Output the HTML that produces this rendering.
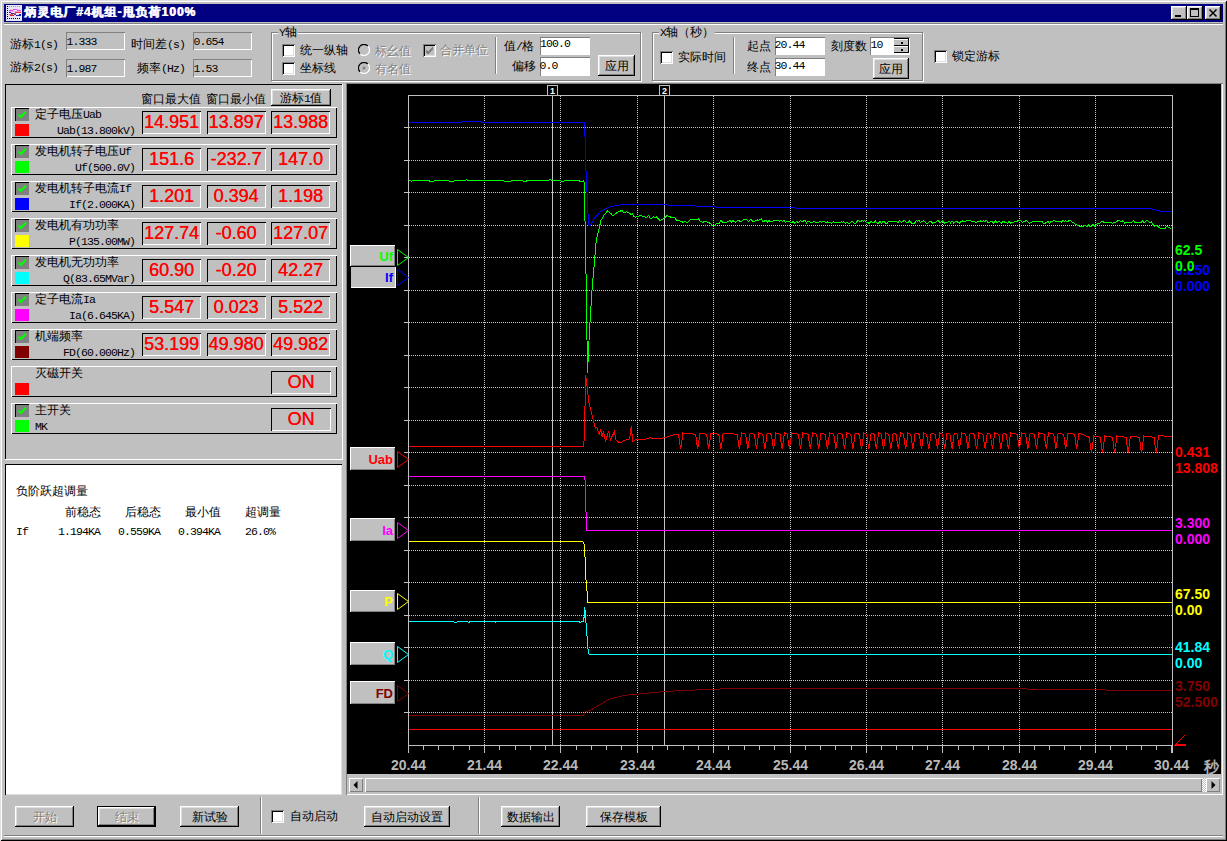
<!DOCTYPE html><html><head><meta charset="utf-8"><style>
html,body{margin:0;padding:0;width:1227px;height:841px;overflow:hidden;background:#c0c0c0;}
body{position:relative;font-family:"Liberation Sans",sans-serif;}
.t{position:absolute;font-size:12px;line-height:12px;white-space:nowrap;}
.m{font-family:"Liberation Mono",monospace;font-size:11.5px;letter-spacing:-0.9px;}
.big{position:absolute;font-family:"Liberation Sans",sans-serif;font-size:18px;line-height:18px;color:#f00;text-shadow:0.35px 0 #f00;text-align:center;white-space:nowrap;}
.cl{position:absolute;font-family:"Liberation Sans",sans-serif;font-weight:bold;font-size:14px;line-height:14px;white-space:nowrap;}
</style></head><body>
<div style="position:absolute;left:0px;top:0px;width:1227px;height:841px;box-shadow:inset 1px 1px #dfdfdf,inset -1px -1px #000,inset 2px 2px #fff,inset -2px -2px #808080;"></div>
<div style="position:absolute;left:4px;top:4px;width:1219px;height:18px;background:#000080;"></div>
<div style="position:absolute;left:4px;top:23px;width:1219px;height:2px;border-top:1px solid #808080;border-bottom:1px solid #fff;box-sizing:border-box;"></div>
<svg style="position:absolute;left:6px;top:5px" width="16" height="16" shape-rendering="crispEdges"><rect x="0" y="0" width="16" height="16" fill="#e4e4f4"/><rect x="1" y="1" width="1" height="1" fill="#000"/><rect x="1" y="3" width="1" height="1" fill="#000"/><rect x="1" y="5" width="1" height="1" fill="#000"/><rect x="1" y="7" width="1" height="1" fill="#000"/><rect x="1" y="9" width="1" height="1" fill="#000"/><rect x="1" y="11" width="1" height="1" fill="#000"/><rect x="1" y="13" width="1" height="1" fill="#000"/><rect x="3" y="13" width="1" height="1" fill="#000"/><rect x="5" y="13" width="1" height="1" fill="#000"/><rect x="7" y="13" width="1" height="1" fill="#000"/><rect x="9" y="13" width="1" height="1" fill="#000"/><rect x="11" y="13" width="1" height="1" fill="#000"/><rect x="13" y="13" width="1" height="1" fill="#000"/><rect x="3" y="1" width="1" height="1" fill="#98a898"/><rect x="5" y="1" width="1" height="1" fill="#98a898"/><rect x="7" y="1" width="1" height="1" fill="#98a898"/><rect x="9" y="1" width="1" height="1" fill="#98a898"/><rect x="11" y="1" width="1" height="1" fill="#98a898"/><rect x="13" y="1" width="1" height="1" fill="#98a898"/><rect x="7" y="4" width="4" height="1" fill="#e050e0"/><rect x="3" y="5" width="4" height="1" fill="#e050e0"/><rect x="11" y="5" width="4" height="1" fill="#e050e0"/><rect x="3" y="6" width="12" height="1" fill="#ff98d0"/><rect x="4" y="4" width="3" height="1" fill="#f0c0f0"/><rect x="11" y="4" width="3" height="1" fill="#f0c0f0"/><rect x="3" y="7" width="2" height="1" fill="#2020c0"/><rect x="5" y="8" width="3" height="1" fill="#2020c0"/><rect x="8" y="9" width="2" height="1" fill="#802080"/><rect x="10" y="10" width="2" height="1" fill="#2020c0"/><rect x="12" y="10" width="3" height="1" fill="#2020c0"/><rect x="13" y="9" width="2" height="1" fill="#2020c0"/><rect x="9" y="7" width="6" height="1" fill="#e04040"/><rect x="8" y="8" width="2" height="1" fill="#e06060"/><rect x="3" y="9" width="4" height="1" fill="#e06060"/><rect x="4" y="10" width="4" height="1" fill="#d02020"/></svg>
<div class="t" style="left:24px;top:6px;color:#fff;font-weight:bold;letter-spacing:1px;font-size:12px;text-shadow:0.7px 0 #fff">炳灵电厂#4机组-甩负荷100%</div>
<div style="position:absolute;left:1171px;top:6px;width:16px;height:14px;background:#c0c0c0;box-shadow:inset -1px -1px #000,inset 1px 1px #fff,inset -2px -2px #808080,inset 2px 2px #dfdfdf;"></div>
<div style="position:absolute;left:1187px;top:6px;width:16px;height:14px;background:#c0c0c0;box-shadow:inset -1px -1px #000,inset 1px 1px #fff,inset -2px -2px #808080,inset 2px 2px #dfdfdf;"></div>
<div style="position:absolute;left:1205px;top:6px;width:16px;height:14px;background:#c0c0c0;box-shadow:inset -1px -1px #000,inset 1px 1px #fff,inset -2px -2px #808080,inset 2px 2px #dfdfdf;"></div>
<div style="position:absolute;left:1175px;top:15px;width:6px;height:2px;background:#000"></div>
<div style="position:absolute;left:1190px;top:8px;width:9px;height:9px;box-sizing:border-box;border:1px solid #000;border-top-width:2px"></div>
<svg style="position:absolute;left:1205px;top:6px" width="16" height="14"><path d="M4.5 3.5 L11.5 10.5 M11.5 3.5 L4.5 10.5" stroke="#000" stroke-width="1.5"/></svg>
<div class="t" style="left:10px;top:38px;color:#000;">游标<span class="m">1(s)</span></div>
<div style="position:absolute;left:66px;top:32px;width:59px;height:18px;box-shadow:inset 1px 1px #808080,inset -1px -1px #fff;"></div>
<div class="t" style="left:66.5px;top:35px;color:#000;"><span class="m">1.333</span></div>
<div class="t" style="left:131px;top:38px;color:#000;">时间差<span class="m">(s)</span></div>
<div style="position:absolute;left:193px;top:32px;width:59px;height:18px;box-shadow:inset 1px 1px #808080,inset -1px -1px #fff;"></div>
<div class="t" style="left:193.5px;top:35px;color:#000;"><span class="m">0.654</span></div>
<div class="t" style="left:10px;top:61px;color:#000;">游标<span class="m">2(s)</span></div>
<div style="position:absolute;left:66px;top:59px;width:59px;height:18px;box-shadow:inset 1px 1px #808080,inset -1px -1px #fff;"></div>
<div class="t" style="left:66.5px;top:62px;color:#000;"><span class="m">1.987</span></div>
<div class="t" style="left:137px;top:62px;color:#000;">频率<span class="m">(Hz)</span></div>
<div style="position:absolute;left:193px;top:59px;width:59px;height:18px;box-shadow:inset 1px 1px #808080,inset -1px -1px #fff;"></div>
<div class="t" style="left:193.5px;top:62px;color:#000;"><span class="m">1.53</span></div>
<div style="position:absolute;left:271px;top:32px;width:370px;height:49px;border:1px solid #808080;box-shadow:1px 1px #fff, inset 1px 1px #fff;box-sizing:border-box;"></div>
<div class="t" style="left:278px;top:26px;background:#c0c0c0;padding:0 1px"><span class="m">Y</span>轴</div>
<div style="position:absolute;left:282px;top:44px;width:13px;height:13px;background:#fff;box-shadow:inset 1px 1px #808080,inset -1px -1px #fff,inset 2px 2px #000,inset -2px -2px #dfdfdf;"></div>
<div class="t" style="left:300px;top:44px;color:#000;">统一纵轴</div>
<div style="position:absolute;left:282px;top:62px;width:13px;height:13px;background:#fff;box-shadow:inset 1px 1px #808080,inset -1px -1px #fff,inset 2px 2px #000,inset -2px -2px #dfdfdf;"></div>
<div class="t" style="left:300px;top:62px;color:#000;">坐标线</div>
<svg style="position:absolute;left:358px;top:44px" width="12" height="12"><path d="M2.1 9.9 A5.5 5.5 0 0 1 9.9 2.1" stroke="#000" stroke-width="1.3" fill="none"/><path d="M9.9 2.1 A5.5 5.5 0 0 1 2.1 9.9" stroke="#fff" stroke-width="1.3" fill="none"/><circle cx="6" cy="6" r="4.6" fill="#c0c0c0"/>
</svg>
<div class="t" style="left:375px;top:45px;color:#808080;text-shadow:1px 1px #fff;">标幺值</div>
<svg style="position:absolute;left:358px;top:62px" width="12" height="12"><path d="M2.1 9.9 A5.5 5.5 0 0 1 9.9 2.1" stroke="#000" stroke-width="1.3" fill="none"/><path d="M9.9 2.1 A5.5 5.5 0 0 1 2.1 9.9" stroke="#fff" stroke-width="1.3" fill="none"/><circle cx="6" cy="6" r="4.6" fill="#c0c0c0"/>
<circle cx="6" cy="6" r="1.5" fill="#808080"/>
</svg>
<div class="t" style="left:375px;top:62.5px;color:#808080;text-shadow:1px 1px #fff;">有名值</div>
<div style="position:absolute;left:423px;top:44px;width:13px;height:13px;background:#c0c0c0;box-shadow:inset 1px 1px #808080,inset -1px -1px #fff,inset 2px 2px #000,inset -2px -2px #dfdfdf;"></div>
<svg style="position:absolute;left:423px;top:44px" width="13" height="13"><path d="M3 6 L5 8 L10 3 M3 7 L5 9 L10 4 M3 8 L5 10 L10 5" stroke="#808080" stroke-width="1" fill="none"/></svg>
<div class="t" style="left:440px;top:44px;color:#808080;text-shadow:1px 1px #fff;">合并单位</div>
<div style="position:absolute;left:495px;top:37px;width:1px;height:37px;background:#808080;box-shadow:1px 0 #fff;"></div>
<div class="t" style="left:504px;top:40px;color:#000;">值<span class="m">/</span>格</div>
<div style="position:absolute;left:540px;top:37px;width:50px;height:18px;background:#fff;box-shadow:inset 1px 1px #808080,inset -1px -1px #fff;"></div>
<div class="t" style="left:540px;top:37px;color:#000;"><span class="m">100.0</span></div>
<div class="t" style="left:512px;top:60px;color:#000;">偏移</div>
<div style="position:absolute;left:540px;top:57px;width:50px;height:19px;background:#fff;box-shadow:inset 1px 1px #808080,inset -1px -1px #fff;"></div>
<div class="t" style="left:539.5px;top:58.5px;color:#000;"><span class="m">0.0</span></div>
<div style="position:absolute;left:598px;top:55px;width:37px;height:21px;background:#c0c0c0;box-shadow:inset -1px -1px #000,inset 1px 1px #fff,inset -2px -2px #808080,inset 2px 2px #dfdfdf;"></div>
<div class="t" style="left:598px;top:59.5px;width:37px;text-align:center;color:#000;">应用</div>
<div style="position:absolute;left:652px;top:32px;width:271px;height:49px;border:1px solid #808080;box-shadow:1px 1px #fff, inset 1px 1px #fff;box-sizing:border-box;"></div>
<div class="t" style="left:659px;top:26px;background:#c0c0c0;padding:0 1px"><span class="m">X</span>轴（秒）</div>
<div style="position:absolute;left:660px;top:51px;width:13px;height:13px;background:#fff;box-shadow:inset 1px 1px #808080,inset -1px -1px #fff,inset 2px 2px #000,inset -2px -2px #dfdfdf;"></div>
<div class="t" style="left:678px;top:51px;color:#000;">实际时间</div>
<div style="position:absolute;left:733px;top:37px;width:1px;height:37px;background:#808080;box-shadow:1px 0 #fff;"></div>
<div class="t" style="left:747px;top:40px;color:#000;">起点</div>
<div style="position:absolute;left:775px;top:37px;width:50px;height:18px;background:#fff;box-shadow:inset 1px 1px #808080,inset -1px -1px #fff;"></div>
<div class="t" style="left:774.5px;top:38px;color:#000;"><span class="m">20.44</span></div>
<div class="t" style="left:747px;top:61px;color:#000;">终点</div>
<div style="position:absolute;left:775px;top:58px;width:50px;height:18px;background:#fff;box-shadow:inset 1px 1px #808080,inset -1px -1px #fff;"></div>
<div class="t" style="left:774.5px;top:59px;color:#000;"><span class="m">30.44</span></div>
<div class="t" style="left:831px;top:40px;color:#000;">刻度数</div>
<div style="position:absolute;left:870px;top:37px;width:40px;height:18px;background:#fff;box-shadow:inset 1px 1px #808080,inset -1px -1px #fff;"></div>
<div class="t" style="left:870.5px;top:38px;color:#000;"><span class="m">10</span></div>
<div style="position:absolute;left:894px;top:38px;width:15px;height:15px;background:#c0c0c0;border-top:1px solid #000;border-right:1px solid #000;box-sizing:border-box;"></div>
<div style="position:absolute;left:894px;top:39px;width:14px;height:7px;background:#c0c0c0;box-shadow:inset 0 1px #fff,inset 0 -1px #000;"></div>
<div style="position:absolute;left:894px;top:46px;width:14px;height:7px;background:#c0c0c0;box-shadow:inset 0 1px #fff,inset 0 -1px #000;"></div>
<div style="position:absolute;left:901px;top:42px;width:1.5px;height:1.5px;background:#000;"></div>
<div style="position:absolute;left:901px;top:49px;width:1.5px;height:1.5px;background:#000;"></div>
<div style="position:absolute;left:873px;top:58px;width:36px;height:21px;background:#c0c0c0;box-shadow:inset -1px -1px #000,inset 1px 1px #fff,inset -2px -2px #808080,inset 2px 2px #dfdfdf;"></div>
<div class="t" style="left:873px;top:62.5px;width:36px;text-align:center;color:#000;">应用</div>
<div style="position:absolute;left:934px;top:50px;width:13px;height:13px;background:#fff;box-shadow:inset 1px 1px #808080,inset -1px -1px #fff,inset 2px 2px #000,inset -2px -2px #dfdfdf;"></div>
<div class="t" style="left:952px;top:50px;color:#000;">锁定游标</div>
<div style="position:absolute;left:5px;top:84px;width:338px;height:376px;box-shadow:inset -1px -1px #fff,inset 1px 1px #000;"></div>
<div class="t" style="left:141px;top:92.5px;color:#000;">窗口最大值</div>
<div class="t" style="left:206px;top:92.5px;color:#000;">窗口最小值</div>
<div style="position:absolute;left:271px;top:89px;width:60px;height:17px;background:#c0c0c0;box-shadow:inset -1px -1px #000,inset 1px 1px #fff,inset -2px -2px #808080,inset 2px 2px #dfdfdf;"></div>
<div class="t" style="left:271px;top:91.5px;width:60px;text-align:center;color:#000;">游标<span class="m">1</span>值</div>
<div style="position:absolute;left:11px;top:107px;width:326px;height:31px;background:#c0c0c0;box-shadow:inset 1px 1px #fff,inset -1px -1px #000;"></div>
<div style="position:absolute;left:15px;top:108px;width:14px;height:13px;background:#808080;box-shadow:inset 1px 1px #000;"></div>
<svg style="position:absolute;left:15px;top:108px" width="14" height="13"><path d="M3.5 6.5 L6 9 L11 3.5" stroke="#00ff00" stroke-width="2" fill="none"/></svg>
<div style="position:absolute;left:15px;top:124px;width:14px;height:12px;background:#ff0000;"></div>
<div class="t" style="left:35px;top:108px;color:#000;">定子电压<span class="m">Uab</span></div>
<div class="t" style="right:1092px;top:124px;color:#000;"><span class="m">Uab(13.800kV)</span></div>
<div style="position:absolute;left:142.0px;top:111px;width:59px;height:23px;background:#c0c0c0;box-shadow:inset 1px 1px #000,inset -1px -1px #fff;"></div>
<div class="big" style="left:142.0px;top:112.5px;width:59px">14.951</div>
<div style="position:absolute;left:206.5px;top:111px;width:59px;height:23px;background:#c0c0c0;box-shadow:inset 1px 1px #000,inset -1px -1px #fff;"></div>
<div class="big" style="left:206.5px;top:112.5px;width:59px">13.897</div>
<div style="position:absolute;left:271.0px;top:111px;width:59px;height:23px;background:#c0c0c0;box-shadow:inset 1px 1px #000,inset -1px -1px #fff;"></div>
<div class="big" style="left:271.0px;top:112.5px;width:59px">13.988</div>
<div style="position:absolute;left:11px;top:144px;width:326px;height:31px;background:#c0c0c0;box-shadow:inset 1px 1px #fff,inset -1px -1px #000;"></div>
<div style="position:absolute;left:15px;top:145px;width:14px;height:13px;background:#808080;box-shadow:inset 1px 1px #000;"></div>
<svg style="position:absolute;left:15px;top:145px" width="14" height="13"><path d="M3.5 6.5 L6 9 L11 3.5" stroke="#00ff00" stroke-width="2" fill="none"/></svg>
<div style="position:absolute;left:15px;top:161px;width:14px;height:12px;background:#00ff00;"></div>
<div class="t" style="left:35px;top:145px;color:#000;">发电机转子电压<span class="m">Uf</span></div>
<div class="t" style="right:1092px;top:161px;color:#000;"><span class="m">Uf(500.0V)</span></div>
<div style="position:absolute;left:142.0px;top:148px;width:59px;height:23px;background:#c0c0c0;box-shadow:inset 1px 1px #000,inset -1px -1px #fff;"></div>
<div class="big" style="left:142.0px;top:149.5px;width:59px">151.6</div>
<div style="position:absolute;left:206.5px;top:148px;width:59px;height:23px;background:#c0c0c0;box-shadow:inset 1px 1px #000,inset -1px -1px #fff;"></div>
<div class="big" style="left:206.5px;top:149.5px;width:59px">-232.7</div>
<div style="position:absolute;left:271.0px;top:148px;width:59px;height:23px;background:#c0c0c0;box-shadow:inset 1px 1px #000,inset -1px -1px #fff;"></div>
<div class="big" style="left:271.0px;top:149.5px;width:59px">147.0</div>
<div style="position:absolute;left:11px;top:181px;width:326px;height:31px;background:#c0c0c0;box-shadow:inset 1px 1px #fff,inset -1px -1px #000;"></div>
<div style="position:absolute;left:15px;top:182px;width:14px;height:13px;background:#808080;box-shadow:inset 1px 1px #000;"></div>
<svg style="position:absolute;left:15px;top:182px" width="14" height="13"><path d="M3.5 6.5 L6 9 L11 3.5" stroke="#00ff00" stroke-width="2" fill="none"/></svg>
<div style="position:absolute;left:15px;top:198px;width:14px;height:12px;background:#0000ff;"></div>
<div class="t" style="left:35px;top:182px;color:#000;">发电机转子电流<span class="m">If</span></div>
<div class="t" style="right:1092px;top:198px;color:#000;"><span class="m">If(2.000KA)</span></div>
<div style="position:absolute;left:142.0px;top:185px;width:59px;height:23px;background:#c0c0c0;box-shadow:inset 1px 1px #000,inset -1px -1px #fff;"></div>
<div class="big" style="left:142.0px;top:186.5px;width:59px">1.201</div>
<div style="position:absolute;left:206.5px;top:185px;width:59px;height:23px;background:#c0c0c0;box-shadow:inset 1px 1px #000,inset -1px -1px #fff;"></div>
<div class="big" style="left:206.5px;top:186.5px;width:59px">0.394</div>
<div style="position:absolute;left:271.0px;top:185px;width:59px;height:23px;background:#c0c0c0;box-shadow:inset 1px 1px #000,inset -1px -1px #fff;"></div>
<div class="big" style="left:271.0px;top:186.5px;width:59px">1.198</div>
<div style="position:absolute;left:11px;top:218px;width:326px;height:31px;background:#c0c0c0;box-shadow:inset 1px 1px #fff,inset -1px -1px #000;"></div>
<div style="position:absolute;left:15px;top:219px;width:14px;height:13px;background:#808080;box-shadow:inset 1px 1px #000;"></div>
<svg style="position:absolute;left:15px;top:219px" width="14" height="13"><path d="M3.5 6.5 L6 9 L11 3.5" stroke="#00ff00" stroke-width="2" fill="none"/></svg>
<div style="position:absolute;left:15px;top:235px;width:14px;height:12px;background:#ffff00;"></div>
<div class="t" style="left:35px;top:219px;color:#000;">发电机有功功率</div>
<div class="t" style="right:1092px;top:235px;color:#000;"><span class="m">P(135.00MW)</span></div>
<div style="position:absolute;left:142.0px;top:222px;width:59px;height:23px;background:#c0c0c0;box-shadow:inset 1px 1px #000,inset -1px -1px #fff;"></div>
<div class="big" style="left:142.0px;top:223.5px;width:59px">127.74</div>
<div style="position:absolute;left:206.5px;top:222px;width:59px;height:23px;background:#c0c0c0;box-shadow:inset 1px 1px #000,inset -1px -1px #fff;"></div>
<div class="big" style="left:206.5px;top:223.5px;width:59px">-0.60</div>
<div style="position:absolute;left:271.0px;top:222px;width:59px;height:23px;background:#c0c0c0;box-shadow:inset 1px 1px #000,inset -1px -1px #fff;"></div>
<div class="big" style="left:271.0px;top:223.5px;width:59px">127.07</div>
<div style="position:absolute;left:11px;top:255px;width:326px;height:31px;background:#c0c0c0;box-shadow:inset 1px 1px #fff,inset -1px -1px #000;"></div>
<div style="position:absolute;left:15px;top:256px;width:14px;height:13px;background:#808080;box-shadow:inset 1px 1px #000;"></div>
<svg style="position:absolute;left:15px;top:256px" width="14" height="13"><path d="M3.5 6.5 L6 9 L11 3.5" stroke="#00ff00" stroke-width="2" fill="none"/></svg>
<div style="position:absolute;left:15px;top:272px;width:14px;height:12px;background:#00ffff;"></div>
<div class="t" style="left:35px;top:256px;color:#000;">发电机无功功率</div>
<div class="t" style="right:1092px;top:272px;color:#000;"><span class="m">Q(83.65MVar)</span></div>
<div style="position:absolute;left:142.0px;top:259px;width:59px;height:23px;background:#c0c0c0;box-shadow:inset 1px 1px #000,inset -1px -1px #fff;"></div>
<div class="big" style="left:142.0px;top:260.5px;width:59px">60.90</div>
<div style="position:absolute;left:206.5px;top:259px;width:59px;height:23px;background:#c0c0c0;box-shadow:inset 1px 1px #000,inset -1px -1px #fff;"></div>
<div class="big" style="left:206.5px;top:260.5px;width:59px">-0.20</div>
<div style="position:absolute;left:271.0px;top:259px;width:59px;height:23px;background:#c0c0c0;box-shadow:inset 1px 1px #000,inset -1px -1px #fff;"></div>
<div class="big" style="left:271.0px;top:260.5px;width:59px">42.27</div>
<div style="position:absolute;left:11px;top:292px;width:326px;height:31px;background:#c0c0c0;box-shadow:inset 1px 1px #fff,inset -1px -1px #000;"></div>
<div style="position:absolute;left:15px;top:293px;width:14px;height:13px;background:#808080;box-shadow:inset 1px 1px #000;"></div>
<svg style="position:absolute;left:15px;top:293px" width="14" height="13"><path d="M3.5 6.5 L6 9 L11 3.5" stroke="#00ff00" stroke-width="2" fill="none"/></svg>
<div style="position:absolute;left:15px;top:309px;width:14px;height:12px;background:#ff00ff;"></div>
<div class="t" style="left:35px;top:293px;color:#000;">定子电流<span class="m">Ia</span></div>
<div class="t" style="right:1092px;top:309px;color:#000;"><span class="m">Ia(6.645KA)</span></div>
<div style="position:absolute;left:142.0px;top:296px;width:59px;height:23px;background:#c0c0c0;box-shadow:inset 1px 1px #000,inset -1px -1px #fff;"></div>
<div class="big" style="left:142.0px;top:297.5px;width:59px">5.547</div>
<div style="position:absolute;left:206.5px;top:296px;width:59px;height:23px;background:#c0c0c0;box-shadow:inset 1px 1px #000,inset -1px -1px #fff;"></div>
<div class="big" style="left:206.5px;top:297.5px;width:59px">0.023</div>
<div style="position:absolute;left:271.0px;top:296px;width:59px;height:23px;background:#c0c0c0;box-shadow:inset 1px 1px #000,inset -1px -1px #fff;"></div>
<div class="big" style="left:271.0px;top:297.5px;width:59px">5.522</div>
<div style="position:absolute;left:11px;top:329px;width:326px;height:31px;background:#c0c0c0;box-shadow:inset 1px 1px #fff,inset -1px -1px #000;"></div>
<div style="position:absolute;left:15px;top:330px;width:14px;height:13px;background:#808080;box-shadow:inset 1px 1px #000;"></div>
<svg style="position:absolute;left:15px;top:330px" width="14" height="13"><path d="M3.5 6.5 L6 9 L11 3.5" stroke="#00ff00" stroke-width="2" fill="none"/></svg>
<div style="position:absolute;left:15px;top:346px;width:14px;height:12px;background:#800000;"></div>
<div class="t" style="left:35px;top:330px;color:#000;">机端频率</div>
<div class="t" style="right:1092px;top:346px;color:#000;"><span class="m">FD(60.000Hz)</span></div>
<div style="position:absolute;left:142.0px;top:333px;width:59px;height:23px;background:#c0c0c0;box-shadow:inset 1px 1px #000,inset -1px -1px #fff;"></div>
<div class="big" style="left:142.0px;top:334.5px;width:59px">53.199</div>
<div style="position:absolute;left:206.5px;top:333px;width:59px;height:23px;background:#c0c0c0;box-shadow:inset 1px 1px #000,inset -1px -1px #fff;"></div>
<div class="big" style="left:206.5px;top:334.5px;width:59px">49.980</div>
<div style="position:absolute;left:271.0px;top:333px;width:59px;height:23px;background:#c0c0c0;box-shadow:inset 1px 1px #000,inset -1px -1px #fff;"></div>
<div class="big" style="left:271.0px;top:334.5px;width:59px">49.982</div>
<div style="position:absolute;left:11px;top:366px;width:326px;height:31px;background:#c0c0c0;box-shadow:inset 1px 1px #fff,inset -1px -1px #000;"></div>
<div style="position:absolute;left:15px;top:383px;width:14px;height:12px;background:#ff0000;"></div>
<div class="t" style="left:35px;top:367px;color:#000;">灭磁开关</div>
<div style="position:absolute;left:271px;top:371px;width:60px;height:23px;background:#c0c0c0;box-shadow:inset 1px 1px #000,inset -1px -1px #fff;"></div>
<div class="big" style="left:271px;top:373px;width:60px">ON</div>
<div style="position:absolute;left:11px;top:403px;width:326px;height:31px;background:#c0c0c0;box-shadow:inset 1px 1px #fff,inset -1px -1px #000;"></div>
<div style="position:absolute;left:15px;top:404px;width:14px;height:13px;background:#808080;box-shadow:inset 1px 1px #000;"></div>
<svg style="position:absolute;left:15px;top:404px" width="14" height="13"><path d="M3.5 6.5 L6 9 L11 3.5" stroke="#00ff00" stroke-width="2" fill="none"/></svg>
<div style="position:absolute;left:15px;top:420px;width:14px;height:12px;background:#00ff00;"></div>
<div class="t" style="left:35px;top:404px;color:#000;">主开关</div>
<div class="t" style="left:35px;top:420px;color:#000;"><span class="m">MK</span></div>
<div style="position:absolute;left:271px;top:408px;width:60px;height:23px;background:#c0c0c0;box-shadow:inset 1px 1px #000,inset -1px -1px #fff;"></div>
<div class="big" style="left:271px;top:410px;width:60px">ON</div>
<div style="position:absolute;left:5px;top:464px;width:337px;height:331px;background:#fff;box-shadow:inset 1px 1px #000,inset -1px -1px #dfdfdf;"></div>
<div class="t" style="left:16px;top:485px;color:#000;">负阶跃超调量</div>
<div class="t" style="left:65px;top:505.5px;color:#000;">前稳态</div>
<div class="t" style="left:125px;top:505.5px;color:#000;">后稳态</div>
<div class="t" style="left:185px;top:505.5px;color:#000;">最小值</div>
<div class="t" style="left:245px;top:505.5px;color:#000;">超调量</div>
<div class="t" style="left:16px;top:525px;color:#000;"><span class="m">If</span></div>
<div class="t" style="left:58px;top:525px;color:#000;"><span class="m">1.194KA</span></div>
<div class="t" style="left:118px;top:525px;color:#000;"><span class="m">0.559KA</span></div>
<div class="t" style="left:178px;top:525px;color:#000;"><span class="m">0.394KA</span></div>
<div class="t" style="left:245px;top:525px;color:#000;"><span class="m">26.0%</span></div>
<div style="position:absolute;left:346px;top:83px;width:877px;height:712px;box-shadow:inset 1px 1px #808080,inset -1px -1px #fff;"></div>
<div style="position:absolute;left:347px;top:84px;width:874px;height:690px;background:#000;"></div>
<div style="position:absolute;left:349px;top:778px;width:14px;height:14px;background:#c0c0c0;box-shadow:inset 1px 1px #fff,inset -1px -1px #808080;"></div>
<svg style="position:absolute;left:349px;top:778px" width="14" height="14"><path d="M4.5 7 L8.5 3 L8.5 11 Z" fill="#000"/></svg>
<div style="position:absolute;left:365px;top:778px;width:841px;height:14px;background:conic-gradient(#fff 25%,#c0c0c0 0 50%,#fff 0 75%,#c0c0c0 0) 0 0/2px 2px;"></div>
<div style="position:absolute;left:365px;top:778px;width:837px;height:14px;background:#c0c0c0;box-shadow:inset 1px 1px #fff,inset -1px -1px #808080;"></div>
<div style="position:absolute;left:1206px;top:778px;width:14px;height:14px;background:#c0c0c0;box-shadow:inset 1px 1px #fff,inset -1px -1px #808080;"></div>
<svg style="position:absolute;left:1206px;top:778px" width="14" height="14"><path d="M9.5 7 L5.5 3 L5.5 11 Z" fill="#000"/></svg>
<div style="position:absolute;left:15px;top:806px;width:59px;height:21px;background:#c0c0c0;box-shadow:inset -1px -1px #000,inset 1px 1px #fff,inset -2px -2px #808080,inset 2px 2px #dfdfdf;"></div>
<div class="t" style="left:15px;top:810.5px;width:59px;text-align:center;color:#808080;text-shadow:1px 1px #fff;">开始</div>
<div style="position:absolute;left:97px;top:806px;width:59px;height:21px;background:#c0c0c0;border:1px solid #000;box-sizing:border-box;box-shadow:inset -1px -1px #000,inset 1px 1px #fff,inset -2px -2px #808080,inset 2px 2px #dfdfdf;"></div>
<div class="t" style="left:97px;top:810.5px;width:59px;text-align:center;color:#808080;text-shadow:1px 1px #fff;">结束</div>
<div style="position:absolute;left:180px;top:806px;width:59px;height:21px;background:#c0c0c0;box-shadow:inset -1px -1px #000,inset 1px 1px #fff,inset -2px -2px #808080,inset 2px 2px #dfdfdf;"></div>
<div class="t" style="left:180px;top:810.5px;width:59px;text-align:center;color:#000;">新试验</div>
<div style="position:absolute;left:260px;top:797px;width:1px;height:37px;background:#808080;box-shadow:1px 0 #fff;"></div>
<div style="position:absolute;left:271px;top:810px;width:13px;height:13px;background:#fff;box-shadow:inset 1px 1px #808080,inset -1px -1px #fff,inset 2px 2px #000,inset -2px -2px #dfdfdf;"></div>
<div class="t" style="left:290px;top:810px;color:#000;">自动启动</div>
<div style="position:absolute;left:364px;top:806px;width:86px;height:21px;background:#c0c0c0;box-shadow:inset -1px -1px #000,inset 1px 1px #fff,inset -2px -2px #808080,inset 2px 2px #dfdfdf;"></div>
<div class="t" style="left:364px;top:810.5px;width:86px;text-align:center;color:#000;">自动启动设置</div>
<div style="position:absolute;left:478px;top:797px;width:1px;height:37px;background:#808080;box-shadow:1px 0 #fff;"></div>
<div style="position:absolute;left:501px;top:806px;width:59px;height:21px;background:#c0c0c0;box-shadow:inset -1px -1px #000,inset 1px 1px #fff,inset -2px -2px #808080,inset 2px 2px #dfdfdf;"></div>
<div class="t" style="left:501px;top:810.5px;width:59px;text-align:center;color:#000;">数据输出</div>
<div style="position:absolute;left:586px;top:806px;width:75px;height:21px;background:#c0c0c0;box-shadow:inset -1px -1px #000,inset 1px 1px #fff,inset -2px -2px #808080,inset 2px 2px #dfdfdf;"></div>
<div class="t" style="left:586px;top:810.5px;width:75px;text-align:center;color:#000;">保存模板</div>
<div style="position:absolute;left:4px;top:835px;width:1219px;height:2px;border-top:1px solid #808080;border-bottom:1px solid #fff;box-sizing:border-box;"></div>
<svg style="position:absolute;left:0;top:0" width="1227" height="841" shape-rendering="crispEdges">
<path d="M484.5 96 V745 M560.5 96 V745 M637.5 96 V745 M713.5 96 V745 M790.5 96 V745 M866.5 96 V745 M942.5 96 V745 M1019.5 96 V745 M1095.5 96 V745 M409 127.5 H1172 M409 160.5 H1172 M409 192.5 H1172 M409 225.5 H1172 M409 257.5 H1172 M409 290.5 H1172 M409 322.5 H1172 M409 355.5 H1172 M409 387.5 H1172 M409 420.5 H1172 M409 452.5 H1172 M409 485.5 H1172 M409 517.5 H1172 M409 550.5 H1172 M409 582.5 H1172 M409 615.5 H1172 M409 647.5 H1172 M409 680.5 H1172 M409 712.5 H1172" stroke="#c8c8c8" stroke-dasharray="1 1" fill="none"/>
<path d="M404 127.5 H408 M404 160.5 H408 M404 192.5 H408 M404 225.5 H408 M404 257.5 H408 M404 290.5 H408 M404 322.5 H408 M404 355.5 H408 M404 387.5 H408 M404 420.5 H408 M404 452.5 H408 M404 485.5 H408 M404 517.5 H408 M404 550.5 H408 M404 582.5 H408 M404 615.5 H408 M404 647.5 H408 M404 680.5 H408 M404 712.5 H408 M408.5 746 V753 M423.5 746 V750 M438.5 746 V750 M453.5 746 V750 M469.5 746 V750 M484.5 746 V753 M499.5 746 V750 M515.5 746 V750 M530.5 746 V750 M545.5 746 V750 M560.5 746 V753 M576.5 746 V750 M591.5 746 V750 M606.5 746 V750 M621.5 746 V750 M637.5 746 V753 M652.5 746 V750 M667.5 746 V750 M683.5 746 V750 M698.5 746 V750 M713.5 746 V753 M728.5 746 V750 M744.5 746 V750 M759.5 746 V750 M774.5 746 V750 M790.5 746 V753 M805.5 746 V750 M820.5 746 V750 M835.5 746 V750 M851.5 746 V750 M866.5 746 V753 M881.5 746 V750 M896.5 746 V750 M912.5 746 V750 M927.5 746 V750 M942.5 746 V753 M958.5 746 V750 M973.5 746 V750 M988.5 746 V750 M1003.5 746 V750 M1019.5 746 V753 M1034.5 746 V750 M1049.5 746 V750 M1064.5 746 V750 M1080.5 746 V750 M1095.5 746 V753 M1110.5 746 V750 M1126.5 746 V750 M1141.5 746 V750 M1156.5 746 V750 M1171.5 746 V753" stroke="#c0c0c0" fill="none"/>
<path d="M408 95.5 H1173 M408.5 95 V753 M1172.5 95 V753 M408 745.5 H1173" stroke="#c0c0c0" fill="none"/>
<path d="M552.5 96 V745 M664.5 96 V745" stroke="#c0c0c0" fill="none"/>
<rect x="547.5" y="85.5" width="10" height="10" stroke="#c0c0c0" fill="#000"/>
<rect x="659.5" y="85.5" width="10" height="10" stroke="#c0c0c0" fill="#000"/>
</svg>
<div class="cl" style="left:550px;top:87px;color:#fff;font-size:9px;transform:none;line-height:9px">1</div>
<div class="cl" style="left:662px;top:87px;color:#fff;font-size:9px;transform:none;line-height:9px">2</div>
<svg style="position:absolute;left:0;top:0" width="1227" height="841" shape-rendering="crispEdges">
<g shape-rendering="crispEdges">
<path d="M409 476.5 H584" stroke="#ff00ff"/><path d="M586 530.5 H1172" stroke="#ff00ff"/>
<path d="M409 541.5 H583" stroke="#ffff00"/><path d="M588 602.5 H1172" stroke="#ffff00"/>
<path d="M589 654.5 H1172" stroke="#00ffff"/>
<path d="M409 715.5 H584" stroke="#800000"/>
<path d="M409 729.5 H1172" stroke="#ff0000"/>
<path d="M409 446.5 H584" stroke="#ff0000"/>
</g>
<polyline points="584.0,476.5 585.0,480.0 586.6,530.5" stroke="#ff00ff" stroke-width="1" fill="none"/>
<polyline points="582.7,541.5 584.5,545.0 586.0,580.0 588.0,602.5" stroke="#ffff00" stroke-width="1" fill="none"/>
<polyline points="409.0,122.2 412.0,122.1 415.0,122.4 418.0,122.0 421.0,122.3 424.0,122.2 427.0,122.0 430.0,122.3 433.0,122.0 436.0,122.3 439.0,122.0 442.0,122.0 445.0,122.2 448.0,122.5 451.0,122.0 454.0,122.1 457.0,122.4 460.0,122.6 463.0,121.6 466.0,121.4 469.0,121.8 472.0,121.2 475.0,121.8 478.0,121.4 481.0,122.1 484.0,122.0 487.0,122.2 490.0,122.5 493.0,122.1 496.0,122.4 499.0,122.4 502.0,122.2 505.0,122.3 508.0,122.0 511.0,122.0 514.0,122.1 517.0,122.4 520.0,122.2 523.0,122.2 526.0,122.4 529.0,122.3 532.0,122.2 535.0,122.5 538.0,122.4 541.0,122.1 544.0,122.4 547.0,122.3 550.0,122.6 553.0,122.5 556.0,122.2 559.0,122.6 562.0,122.0 565.0,122.2 568.0,122.5 571.0,122.1 574.0,122.3 577.0,122.0 580.0,122.4 583.0,122.5 584.7,122.0 585.5,159.5 588.5,224.4 590.0,226.0 594.7,218.0 601.0,211.0 610.0,206.6 624.0,204.3 680.0,205.2 720.0,207.2 790.0,207.5 800.0,208.6 1150.0,208.6 1160.0,211.0 1172.0,211.5" stroke="#0000ff" stroke-width="1" fill="none"/>
<polyline points="409.0,180.7 412.0,181.1 415.0,180.3 418.0,180.9 421.0,180.7 424.0,180.7 427.0,180.5 430.0,181.1 433.0,181.2 436.0,180.6 439.0,180.8 442.0,180.0 445.0,180.9 448.0,180.8 451.0,181.3 454.0,181.1 457.0,180.3 460.0,180.4 463.0,180.8 466.0,179.9 469.0,180.5 472.0,180.1 475.0,180.1 478.0,180.0 481.0,181.0 484.0,180.1 487.0,180.2 490.0,180.4 493.0,181.1 496.0,180.0 499.0,180.5 502.0,180.7 505.0,181.1 508.0,181.0 511.0,181.1 514.0,180.3 517.0,180.5 520.0,180.4 523.0,181.1 526.0,181.2 529.0,180.1 532.0,180.1 535.0,180.2 538.0,180.2 541.0,180.6 544.0,180.7 547.0,180.3 550.0,179.9 553.0,180.5 556.0,180.4 559.0,180.7 562.0,181.2 565.0,180.9 568.0,180.6 571.0,180.8 574.0,180.8 577.0,180.0 580.0,181.2 583.0,181.0 583.1,180.6 584.0,182.0 585.5,240.0 587.5,373.0 589.5,330.0 592.0,290.0 596.3,240.0 598.0,233.0 599.5,226.7 601.0,220.2 602.5,218.1 604.0,215.1 605.5,214.5 607.0,210.7 608.5,211.6 610.0,212.9 611.5,214.1 613.0,215.9 614.5,214.4 616.0,213.2 617.5,212.6 619.0,211.4 620.5,211.1 622.0,210.0 623.5,212.8 625.0,212.3 626.5,211.6 628.0,212.6 629.5,213.5 631.0,214.2 632.5,214.0 634.0,216.5 635.5,217.2 637.0,215.9 638.5,216.3 640.0,215.4 641.5,215.5 643.0,216.4 644.5,216.3 646.0,218.1 647.5,216.2 649.0,215.9 650.5,218.8 652.0,217.8 653.5,216.8 655.0,218.2 656.5,216.9 658.0,218.6 659.5,220.2 661.0,220.0 662.5,219.7 664.0,217.8 665.5,217.0 667.0,215.3 668.5,216.6 670.0,216.5 671.5,217.8 673.0,217.0 674.5,217.2 676.0,219.6 677.5,220.7 679.0,220.8 680.5,221.3 682.0,221.9 683.5,222.2 685.0,221.2 686.5,222.7 688.0,221.9 689.5,220.3 691.0,219.6 692.5,219.7 694.0,218.9 695.5,219.6 697.0,219.7 698.5,218.8 700.0,221.0 701.5,221.8 703.0,222.4 704.5,221.3 706.0,221.5 707.5,222.2 709.0,222.8 710.5,223.5 712.0,225.4 713.5,226.4 715.0,225.5 716.5,223.6 718.0,223.4 719.5,223.1 721.0,220.6 722.5,222.2 724.0,222.9 725.5,222.4 727.0,222.2 728.5,221.3 730.0,220.3 731.5,222.0 733.0,220.6 734.5,221.9 736.0,222.3 737.5,220.5 739.0,220.4 740.5,221.9 742.0,221.2 743.5,219.4 745.0,219.2 746.5,219.2 748.0,221.3 749.5,221.0 751.0,219.0 752.5,221.1 754.0,221.6 755.5,220.7 757.0,219.8 758.5,220.5 760.0,219.3 761.5,219.0 763.0,221.9 764.5,221.0 766.0,220.7 767.5,222.0 769.0,220.6 770.5,221.9 772.0,221.9 773.5,220.1 775.0,220.3 776.5,220.4 778.0,220.3 779.5,221.4 781.0,220.5 782.5,221.1 784.0,220.3 785.5,222.7 787.0,221.0 788.5,221.4 790.0,221.9 791.5,222.9 793.0,221.5 794.5,223.0 796.0,221.8 797.5,222.0 799.0,222.0 800.5,220.6 802.0,221.8 803.5,221.0 805.0,220.5 806.5,222.9 808.0,221.0 809.5,221.9 811.0,222.7 812.5,222.2 814.0,221.5 815.5,222.1 817.0,222.2 818.5,222.9 820.0,220.8 821.5,222.2 823.0,221.2 824.5,221.3 826.0,222.8 827.5,222.0 829.0,222.2 830.5,222.8 832.0,223.2 833.5,221.8 835.0,222.3 836.5,222.0 838.0,222.0 839.5,222.6 841.0,221.9 842.5,222.1 844.0,221.9 845.5,223.3 847.0,222.6 848.5,223.1 850.0,223.3 851.5,221.3 853.0,222.2 854.5,223.3 856.0,223.0 857.5,220.9 859.0,220.9 860.5,221.8 862.0,220.7 863.5,221.2 865.0,220.7 866.5,222.5 868.0,222.9 869.5,223.2 871.0,221.0 872.5,222.6 874.0,222.5 875.5,220.9 877.0,223.1 878.5,223.4 880.0,221.2 881.5,223.4 883.0,221.7 884.5,222.0 886.0,223.5 887.5,223.0 889.0,221.0 890.5,221.8 892.0,222.0 893.5,221.5 895.0,221.1 896.5,221.5 898.0,222.7 899.5,220.6 901.0,222.2 902.5,221.8 904.0,220.6 905.5,221.5 907.0,222.4 908.5,222.0 910.0,220.7 911.5,223.5 913.0,222.9 914.5,223.4 916.0,220.8 917.5,221.3 919.0,220.6 920.5,222.8 922.0,221.3 923.5,220.9 925.0,221.8 926.5,223.2 928.0,223.0 929.5,221.3 931.0,220.9 932.5,223.3 934.0,222.2 935.5,222.6 937.0,220.8 938.5,220.7 940.0,222.6 941.5,221.8 943.0,220.7 944.5,223.3 946.0,222.4 947.5,222.9 949.0,220.8 950.5,223.1 952.0,220.7 953.5,223.1 955.0,221.9 956.5,221.5 958.0,222.2 959.5,223.3 961.0,221.3 962.5,220.9 964.0,222.1 965.5,221.2 967.0,220.8 968.5,221.0 970.0,220.7 971.5,221.1 973.0,221.4 974.5,221.4 976.0,222.8 977.5,221.4 979.0,222.0 980.5,221.0 982.0,221.5 983.5,220.6 985.0,221.3 986.5,220.5 988.0,222.7 989.5,222.2 991.0,221.1 992.5,221.9 994.0,223.3 995.5,220.8 997.0,223.0 998.5,221.8 1000.0,222.0 1001.5,223.0 1003.0,221.7 1004.5,222.0 1006.0,222.6 1007.5,223.4 1009.0,221.5 1010.5,223.0 1012.0,222.6 1013.5,222.4 1015.0,221.7 1016.5,221.5 1018.0,220.7 1019.5,220.9 1021.0,220.7 1022.5,222.7 1024.0,221.3 1025.5,221.0 1027.0,220.8 1028.5,223.0 1030.0,223.1 1031.5,222.5 1033.0,221.3 1034.5,221.2 1036.0,221.4 1037.5,221.9 1039.0,221.0 1040.5,221.8 1042.0,221.3 1043.5,223.4 1045.0,223.4 1046.5,222.1 1048.0,221.2 1049.5,223.4 1051.0,221.4 1052.5,221.6 1054.0,220.5 1055.5,221.6 1057.0,221.9 1058.5,222.0 1060.0,221.1 1061.5,222.0 1063.0,220.5 1064.5,221.3 1066.0,220.8 1067.5,221.7 1069.0,220.6 1070.5,220.8 1072.0,222.2 1073.5,222.5 1075.0,224.2 1076.5,224.6 1078.0,225.8 1079.5,226.1 1081.0,226.4 1082.5,226.9 1084.0,225.5 1085.5,225.3 1087.0,227.3 1088.5,224.7 1090.0,226.5 1091.5,226.2 1093.0,224.4 1094.5,226.0 1096.0,225.3 1097.5,223.7 1099.0,223.2 1100.5,222.9 1102.0,220.9 1103.5,222.1 1105.0,222.0 1106.5,223.0 1108.0,222.9 1109.5,223.0 1111.0,222.3 1112.5,223.2 1114.0,222.5 1115.5,222.6 1117.0,221.2 1118.5,220.6 1120.0,220.9 1121.5,221.6 1123.0,220.8 1124.5,223.0 1126.0,222.2 1127.5,222.4 1129.0,222.4 1130.5,222.5 1132.0,222.0 1133.5,220.5 1135.0,222.9 1136.5,222.7 1138.0,222.0 1139.5,222.1 1141.0,222.5 1142.5,220.7 1144.0,222.7 1145.5,221.3 1147.0,220.7 1148.5,221.3 1150.0,222.7 1151.5,222.0 1153.0,224.5 1154.5,226.1 1156.0,225.6 1157.5,226.1 1159.0,227.3 1160.5,228.6 1162.0,228.8 1163.5,228.4 1165.0,228.4 1166.5,226.7 1168.0,226.9 1169.5,227.3 1171.0,228.7" stroke="#00ff00" stroke-width="1" fill="none"/>
<polyline points="583.8,446.4 584.5,429.0 585.7,375.2 588.9,402.5 595.3,428.2 597.0,427.6 599.1,434.6 600.7,430.3 602.3,436.7 603.4,431.4 605.5,441.6 608.7,430.8 610.3,439.9 614.6,431.4 615.7,439.9 620.0,443.2 623.2,441.0 629.6,438.9 631.2,426.0 632.8,441.6 637.1,438.9 643.5,440.0 650.0,437.8 656.4,438.9 664.9,437.8 674.6,434.6 678.5,434.3 679.9,444.5 680.7,448.5 681.5,443.5 682.9,433.0 695.6,434.3 697.0,444.5 697.8,448.5 698.6,443.5 700.0,433.0 706.6,434.3 708.0,444.5 708.8,448.5 709.6,443.5 711.0,433.0 718.8,434.3 720.2,444.5 721.0,448.5 721.8,443.5 723.2,433.0 737.2,434.3 738.6,444.5 739.4,448.5 740.2,443.5 741.6,433.0 745.7,434.3 747.1,444.5 747.9,448.5 748.7,443.5 750.1,433.0 754.3,434.3 755.7,444.5 756.5,448.5 757.3,443.5 758.7,433.0 762.8,434.3 764.2,444.5 765.0,448.5 765.8,443.5 767.2,433.0 771.4,434.3 772.8,444.5 773.6,448.5 774.4,443.5 775.8,433.0 780.0,434.3 781.4,444.5 782.2,448.5 783.0,443.5 784.4,433.0 787.3,434.3 788.7,444.5 789.5,448.5 790.3,443.5 791.7,433.0 798.3,434.3 799.7,444.5 800.5,448.5 801.3,443.5 802.7,433.0 808.1,434.3 809.5,444.5 810.3,448.5 811.1,443.5 812.5,433.0 816.6,434.3 818.0,444.5 818.8,448.5 819.6,443.5 821.0,433.0 825.2,434.3 826.6,444.5 827.4,448.5 828.2,443.5 829.6,433.0 833.8,434.3 835.2,444.5 836.0,448.5 836.8,443.5 838.2,433.0 842.3,434.3 843.7,444.5 844.5,448.5 845.3,443.5 846.7,433.0 850.8,434.3 852.2,444.5 853.0,448.5 853.8,443.5 855.2,433.0 859.4,434.3 860.8,444.5 861.6,448.5 862.4,443.5 863.8,433.0 866.7,434.3 868.1,444.5 868.9,448.5 869.7,443.5 871.1,433.0 874.1,434.3 875.5,444.5 876.3,448.5 877.1,443.5 878.5,433.0 881.4,434.3 882.8,444.5 883.6,448.5 884.4,443.5 885.8,433.0 888.8,434.3 890.2,444.5 891.0,448.5 891.8,443.5 893.2,433.0 896.1,434.3 897.5,444.5 898.3,448.5 899.1,443.5 900.5,433.0 903.5,434.3 904.9,444.5 905.7,448.5 906.5,443.5 907.9,433.0 910.8,434.3 912.2,444.5 913.0,448.5 913.8,443.5 915.2,433.0 919.4,434.3 920.8,444.5 921.6,448.5 922.4,443.5 923.8,433.0 926.7,434.3 928.1,444.5 928.9,448.5 929.7,443.5 931.1,433.0 935.3,434.3 936.7,444.5 937.5,448.5 938.3,443.5 939.7,433.0 942.6,434.3 944.0,444.5 944.8,448.5 945.6,443.5 947.0,433.0 949.9,434.3 951.3,444.5 952.1,448.5 952.9,443.5 954.3,433.0 957.3,434.3 958.7,444.5 959.5,448.5 960.3,443.5 961.7,433.0 965.8,434.3 967.2,444.5 968.0,448.5 968.8,443.5 970.2,433.0 974.4,434.3 975.8,444.5 976.6,448.5 977.4,443.5 978.8,433.0 982.9,434.3 984.3,444.5 985.1,448.5 985.9,443.5 987.3,433.0 990.3,434.3 991.7,444.5 992.5,448.5 993.3,443.5 994.7,433.0 998.8,434.3 1000.2,444.5 1001.0,448.5 1001.8,443.5 1003.2,433.0 1006.2,434.3 1007.6,444.5 1008.4,448.5 1009.2,443.5 1010.6,433.0 1017.2,434.3 1018.6,444.5 1019.4,448.5 1020.2,443.5 1021.6,433.0 1025.7,434.3 1027.1,444.5 1027.9,448.5 1028.7,443.5 1030.1,433.0 1034.3,434.3 1035.7,444.5 1036.5,448.5 1037.3,443.5 1038.7,433.0 1044.1,434.3 1045.5,444.5 1046.3,448.5 1047.1,443.5 1048.5,433.0 1053.8,434.3 1055.2,444.5 1056.0,448.5 1056.8,443.5 1058.2,433.0 1063.6,434.3 1065.0,444.5 1065.8,448.5 1066.6,443.5 1068.0,433.0 1074.6,434.3 1076.0,444.5 1076.8,448.5 1077.6,443.5 1079.0,433.0 1089.3,437.3 1090.7,448.5 1091.5,452.5 1092.3,447.5 1093.7,436.0 1100.3,437.3 1101.7,448.5 1102.5,452.5 1103.3,447.5 1104.7,436.0 1112.5,437.3 1113.9,448.5 1114.7,452.5 1115.5,447.5 1116.9,436.0 1126.0,437.3 1127.4,448.5 1128.2,452.5 1129.0,447.5 1130.4,436.0 1139.4,437.3 1140.8,448.5 1141.6,452.5 1142.4,447.5 1143.8,436.0 1154.1,437.3 1155.5,448.5 1156.3,452.5 1157.1,447.5 1158.5,436.0 1160.0,435.5 1172.0,437.0" stroke="#ff0000" stroke-width="1" fill="none"/>
<polyline points="409.0,621.4 412.0,621.7 415.0,621.1 418.0,621.2 421.0,621.4 424.0,621.8 427.0,621.8 430.0,621.8 433.0,621.4 436.0,621.6 439.0,621.6 442.0,621.6 445.0,621.2 448.0,622.0 451.0,621.3 454.0,622.1 457.0,622.0 460.0,621.1 463.0,621.6 466.0,621.9 469.0,622.1 472.0,621.5 475.0,621.4 478.0,621.3 481.0,622.0 484.0,621.3 487.0,621.7 490.0,621.2 493.0,621.6 496.0,622.1 499.0,621.2 502.0,621.9 505.0,621.6 508.0,622.0 511.0,621.8 514.0,621.3 517.0,622.0 520.0,621.6 523.0,621.1 526.0,621.1 529.0,621.6 532.0,621.6 535.0,621.4 538.0,621.2 541.0,621.4 544.0,621.4 547.0,621.9 550.0,621.1 553.0,621.9 556.0,621.9 559.0,621.2 562.0,622.0 565.0,621.8 568.0,622.0 571.0,621.4 574.0,621.5 577.0,621.5 580.0,622.1 583.0,621.7 583.7,621.6 584.8,607.3 588.4,653.7 590.0,654.5" stroke="#00ffff" stroke-width="1" fill="none"/>
<polyline points="583.6,715.3 585.0,712.0 590.0,710.4 600.0,704.6 609.0,699.3 617.0,697.3 625.0,695.3 645.0,693.4 664.0,691.5 683.0,690.6 703.0,689.6 720.0,689.0 739.0,688.4 1020.0,688.3 1030.0,689.3 1100.0,689.4 1110.0,690.4 1172.0,690.4" stroke="#800000" stroke-width="1" fill="none"/>
<path d="M1185 735 L1175 745 H1186" stroke="#ff0000" stroke-width="1.2" fill="none"/>
</svg>
<div class="cl" style="left:408.5px;top:758px;width:60px;margin-left:-30px;text-align:center;color:#b8b8b8">20.44</div>
<div class="cl" style="left:484.5px;top:758px;width:60px;margin-left:-30px;text-align:center;color:#b8b8b8">21.44</div>
<div class="cl" style="left:560.5px;top:758px;width:60px;margin-left:-30px;text-align:center;color:#b8b8b8">22.44</div>
<div class="cl" style="left:637.5px;top:758px;width:60px;margin-left:-30px;text-align:center;color:#b8b8b8">23.44</div>
<div class="cl" style="left:713.5px;top:758px;width:60px;margin-left:-30px;text-align:center;color:#b8b8b8">24.44</div>
<div class="cl" style="left:790.5px;top:758px;width:60px;margin-left:-30px;text-align:center;color:#b8b8b8">25.44</div>
<div class="cl" style="left:866.5px;top:758px;width:60px;margin-left:-30px;text-align:center;color:#b8b8b8">26.44</div>
<div class="cl" style="left:942.5px;top:758px;width:60px;margin-left:-30px;text-align:center;color:#b8b8b8">27.44</div>
<div class="cl" style="left:1019.5px;top:758px;width:60px;margin-left:-30px;text-align:center;color:#b8b8b8">28.44</div>
<div class="cl" style="left:1095.5px;top:758px;width:60px;margin-left:-30px;text-align:center;color:#b8b8b8">29.44</div>
<div class="cl" style="left:1171.5px;top:758px;width:60px;margin-left:-30px;text-align:center;color:#b8b8b8">30.44</div>
<div class="t" style="left:1204px;top:758.5px;color:#b0b0b0;font-size:15px;line-height:15px;font-weight:bold;">秒</div>
<div style="position:absolute;left:350px;top:245px;width:45px;height:21px;background:#c0c0c0;box-shadow:inset 1px 1px #fff,inset -1px -1px #808080;"></div>
<div style="position:absolute;left:350px;top:245.5px;width:43px;height:21px;line-height:21px;text-align:right;font-family:'Liberation Sans',sans-serif;font-weight:bold;font-size:13px;color:#00ff00">Uf</div>
<svg style="position:absolute;left:396px;top:249.0px" width="14" height="18"><path d="M1.5 0.5 L12.5 8.5 L1.5 16.5 Z" stroke="#00ff00" fill="none"/></svg>
<div style="position:absolute;left:350px;top:266px;width:46px;height:22px;background:#c0c0c0;box-shadow:inset 1px 1px #000,inset -1px -1px #fff;"></div>
<div style="position:absolute;left:350px;top:266.5px;width:43px;height:22px;line-height:22px;text-align:right;font-family:'Liberation Sans',sans-serif;font-weight:bold;font-size:13px;color:#0000ff">If</div>
<svg style="position:absolute;left:396px;top:268.5px" width="14" height="18"><path d="M1.5 0.5 L12.5 8.5 L1.5 16.5 Z" stroke="#0000ff" fill="none"/></svg>
<div style="position:absolute;left:350px;top:447px;width:45px;height:23px;background:#c0c0c0;box-shadow:inset 1px 1px #fff,inset -1px -1px #808080;"></div>
<div style="position:absolute;left:350px;top:447.5px;width:43px;height:23px;line-height:23px;text-align:right;font-family:'Liberation Sans',sans-serif;font-weight:bold;font-size:13px;color:#ff0000">Uab</div>
<svg style="position:absolute;left:396px;top:451.0px" width="14" height="18"><path d="M1.5 0.5 L12.5 8.5 L1.5 16.5 Z" stroke="#ff0000" fill="none"/></svg>
<div style="position:absolute;left:350px;top:518px;width:45px;height:23px;background:#c0c0c0;box-shadow:inset 1px 1px #fff,inset -1px -1px #808080;"></div>
<div style="position:absolute;left:350px;top:518.5px;width:43px;height:23px;line-height:23px;text-align:right;font-family:'Liberation Sans',sans-serif;font-weight:bold;font-size:13px;color:#ff00ff">Ia</div>
<svg style="position:absolute;left:396px;top:521.5px" width="14" height="18"><path d="M1.5 0.5 L12.5 8.5 L1.5 16.5 Z" stroke="#ff00ff" fill="none"/></svg>
<div style="position:absolute;left:350px;top:590px;width:45px;height:22px;background:#c0c0c0;box-shadow:inset 1px 1px #fff,inset -1px -1px #808080;"></div>
<div style="position:absolute;left:350px;top:590.5px;width:43px;height:22px;line-height:22px;text-align:right;font-family:'Liberation Sans',sans-serif;font-weight:bold;font-size:13px;color:#ffff00">P</div>
<svg style="position:absolute;left:396px;top:593.0px" width="14" height="18"><path d="M1.5 0.5 L12.5 8.5 L1.5 16.5 Z" stroke="#ffff00" fill="none"/></svg>
<div style="position:absolute;left:350px;top:642px;width:45px;height:23px;background:#c0c0c0;box-shadow:inset 1px 1px #fff,inset -1px -1px #808080;"></div>
<div style="position:absolute;left:350px;top:642.5px;width:43px;height:23px;line-height:23px;text-align:right;font-family:'Liberation Sans',sans-serif;font-weight:bold;font-size:13px;color:#00ffff">Q</div>
<svg style="position:absolute;left:396px;top:645.5px" width="14" height="18"><path d="M1.5 0.5 L12.5 8.5 L1.5 16.5 Z" stroke="#00ffff" fill="none"/></svg>
<div style="position:absolute;left:350px;top:681px;width:45px;height:23px;background:#c0c0c0;box-shadow:inset 1px 1px #fff,inset -1px -1px #808080;"></div>
<div style="position:absolute;left:350px;top:681.5px;width:43px;height:23px;line-height:23px;text-align:right;font-family:'Liberation Sans',sans-serif;font-weight:bold;font-size:13px;color:#800000">FD</div>
<svg style="position:absolute;left:396px;top:684.5px" width="14" height="18"><path d="M1.5 0.5 L12.5 8.5 L1.5 16.5 Z" stroke="#800000" fill="none"/></svg>
<div class="cl" style="left:1175px;top:262.5px;color:#0000ff">0.250</div>
<div class="cl" style="left:1175px;top:278.5px;color:#0000ff">0.000</div>
<div class="cl" style="left:1175px;top:243.0px;color:#00ff00">62.5</div>
<div class="cl" style="left:1175px;top:259.0px;color:#00ff00">0.0</div>
<div class="cl" style="left:1175px;top:445.0px;color:#ff0000">0.431</div>
<div class="cl" style="left:1175px;top:461.0px;color:#ff0000">13.808</div>
<div class="cl" style="left:1175px;top:515.5px;color:#ff00ff">3.300</div>
<div class="cl" style="left:1175px;top:531.5px;color:#ff00ff">0.000</div>
<div class="cl" style="left:1175px;top:587.0px;color:#ffff00">67.50</div>
<div class="cl" style="left:1175px;top:603.0px;color:#ffff00">0.00</div>
<div class="cl" style="left:1175px;top:639.5px;color:#00ffff">41.84</div>
<div class="cl" style="left:1175px;top:655.5px;color:#00ffff">0.00</div>
<div class="cl" style="left:1175px;top:678.5px;color:#800000">3.750</div>
<div class="cl" style="left:1175px;top:694.5px;color:#800000">52.500</div>
</body></html>
